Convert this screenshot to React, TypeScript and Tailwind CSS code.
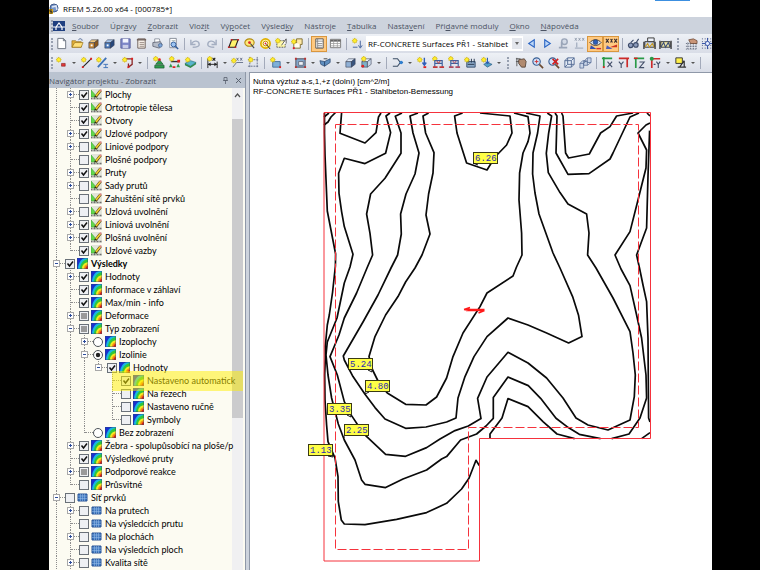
import React from 'react';

type IconName = keyof typeof drawings;

type Tool = { icon: IconName; label: string; active?: boolean; menu?: boolean } | 'sep' | 'grip';

type TreeRow = {
  label: string;
  level: number;
  icon: 'model' | 'results' | 'mesh';
  state?: 'on' | 'off' | 'mixed';
  radio?: boolean;
  toggle?: '+' | '-';
  bold?: boolean;
  marked?: boolean;
};

const Spark = ({ x = 4, y = 4 }: { x?: number; y?: number }) => (
  <g>
    <path d={`M${x - 3} ${y}h6M${x} ${y - 3}v6M${x - 2} ${y - 2}l4 4M${x + 2} ${y - 2}l-4 4`} stroke="#dcc020" strokeWidth="1" />
    <circle cx={x} cy={y} r="2.200" fill="#ffee30" stroke="#b89a00" strokeWidth=".4" />
  </g>
);

const Box = ({ front, top, side }: { front: string; top: string; side: string }) => (
  <g>
    <path d="M2 6h6v6H2z" fill={front} stroke="#333a50" strokeWidth=".6" />
    <path d="M2 6l3-3h7L8 6z" fill={top} stroke="#333a50" strokeWidth=".6" />
    <path d="M8 6l4-3v6l-4 3z" fill={side} stroke="#333a50" strokeWidth=".6" />
  </g>
);

const Supports = ({ tone }: { tone: string }) => (
  <g>
    <Spark x={3} y={3} />
    <path d="M3 12V5h8v7M3 8h8" stroke="#3c5f9e" strokeWidth="1.2" />
    <path d="M1 12h5M8 12h5" stroke={tone} strokeWidth="2" />
    <path d="M5 5l2 3 2-3" stroke={tone} />
  </g>
);

const drawings = {
  page: <path d="M3 1.500h6l2.500 2.500v8.500H3zM9 1.500V4h2.500" fill="#fff" stroke="#6b7280" />,
  open: (
    <g>
      <path d="M1 11V4h4l1 1h5v6z" fill="#e3b03a" stroke="#8f6a14" strokeWidth=".7" />
      <path d="M1 11l3-5h9l-2 5z" fill="#ffe07a" stroke="#8f6a14" strokeWidth=".7" />
      <path d="M8 3c2-2 4-1 4 1" stroke="#47618f" />
    </g>
  ),
  boxBrown: (
    <g>
      <Box front="#c98a3a" top="#f0c77c" side="#8c571b" />
      <path d="M4 9h2" stroke="#fff" strokeWidth="2" />
    </g>
  ),
  boxBlue: (
    <g>
      <Box front="#4a78b8" top="#a8c6ec" side="#26477c" />
      <path d="M4 9h2" stroke="#fff" strokeWidth="2" />
    </g>
  ),
  save: (
    <g>
      <path d="M2 2h10v10H2z" fill="#7d86c8" stroke="#5b629c" />
      <path d="M4 2h6v4H4z" fill="#f3f5ff" />
      <path d="M4 8.500h6V12H4z" fill="#c9cde8" />
    </g>
  ),
  report: (
    <g>
      <path d="M3 2h8v10H3z" fill="#f5eee6" stroke="#6d5f5a" />
      <path d="M2 3h10" stroke="#6d5f5a" strokeWidth="1.500" />
      <path d="M5 6h5M5 8h5M5 10h5" stroke="#9a8d86" />
    </g>
  ),
  print: (
    <g>
      <path d="M4 6V2h5l1 4" fill="#fff" stroke="#777d8c" strokeWidth=".8" />
      <path d="M2 6l8-1 2 3-3 4-7-2z" fill="#b6bcc8" stroke="#555b69" strokeWidth=".8" />
      <circle cx="10" cy="9" r="2" fill="#7fa6d8" stroke="#43608c" strokeWidth=".7" />
    </g>
  ),
  preview: (
    <g>
      <path d="M3 1.500h7v10H3z" fill="#fff" stroke="#6b7280" strokeWidth=".8" />
      <path d="M5 4h4M5 6h3" stroke="#9aa" />
      <circle cx="7" cy="8" r="2.600" fill="#9cc4f2" stroke="#305c9a" />
      <path d="M9 10l3 3" stroke="#305c9a" strokeWidth="1.600" />
    </g>
  ),
  undo: <path d="M2 3v5h5M3 7c2-4 8-3 8 1 0 2-2 3-7 3" stroke="#a3adc0" strokeWidth="1.500" />,
  redo: <path d="M12 3v5H7M11 7C9 3 3 4 3 8c0 2 2 3 7 3" stroke="#a3adc0" strokeWidth="1.500" />,
  plane: (
    <g>
      <path d="M2 11l3-8h7l-3 8z" fill="#fff36b" stroke="#222" strokeWidth="1.200" />
      <path d="M1 11h2M4 3h2M11 3h2M8 11h2" stroke="#c62424" strokeWidth="1.800" />
    </g>
  ),
  circlePick: (
    <g>
      <ellipse cx="7" cy="6" rx="5" ry="4" fill="#ffe97a" stroke="#b28c10" strokeWidth="1.200" />
      <circle cx="7" cy="6" r="1.500" fill="#d23" />
      <path d="M8 7l4 5" stroke="#444" strokeWidth="1.200" />
    </g>
  ),
  target: (
    <g>
      <circle cx="7" cy="7" r="5" fill="#fff3a0" stroke="#e0b000" strokeWidth="1.800" />
      <circle cx="7" cy="7" r="2.500" fill="#fff" stroke="#c58a00" />
      <circle cx="7" cy="7" r="1" fill="#d23" />
      <path d="M8 8l4 5" stroke="#333" />
    </g>
  ),
  selectNew: (
    <g>
      <path d="M2 4h9v7H2z" fill="#fff9a8" stroke="#555" strokeDasharray="2 1" />
      <Spark x={3} y={4} />
      <path d="M7 9l5-7v5" fill="#fff" stroke="#333" strokeWidth=".8" />
    </g>
  ),
  boxNew: (
    <g>
      <path d="M3 6h7v6H3z" fill="#fffdf0" stroke="#7c6a30" />
      <path d="M6 6V2h6v6h-2" fill="#ffe9a8" stroke="#7c6a30" />
      <circle cx="3" cy="12" r="1.200" fill="#d23" />
      <Spark x={3} y={5} />
    </g>
  ),
  list: (
    <g>
      <path d="M3 2h8v10H3z" fill="#fff" stroke="#555" />
      <path d="M3 4.500h8M5 7h5M5 9h5M5 11h5M5 2v10" stroke="#777" strokeWidth=".8" />
    </g>
  ),
  table: (
    <g>
      <path d="M1.500 2.500h11v9h-11z" fill="#fff" stroke="#777" />
      <path d="M1.500 4h11" stroke="#666" strokeWidth="2" />
      <path d="M1.500 7h11M1.500 9.500h11M5 3v9M9 3v9" stroke="#999" strokeWidth=".8" />
    </g>
  ),
  loadNew: (
    <g>
      <Spark x={4} y={4} />
      <path d="M10 4v7M8 9l2 3 2-3M2 11h5" stroke="#41609a" />
    </g>
  ),
  left: <path d="M10 3L4 7l6 4z" fill="#bcd7f8" stroke="#2c66c4" strokeWidth="1.200" />,
  right: <path d="M4 3l6 4-6 4z" fill="#bcd7f8" stroke="#2c66c4" strokeWidth="1.200" />,
  showLoad: (
    <g>
      <circle cx="8" cy="5" r="3" fill="#d3dae6" stroke="#9aa5b8" strokeWidth="1.500" />
      <path d="M5 5v6M2 11.500h9" stroke="#9aa5b8" strokeWidth="1.800" />
    </g>
  ),
  values: (
    <g>
      <path d="M2 1l2 3M4 1L2 4M6 1l2 3M8 1L6 4M10 1l2 3M12 1l-2 3" stroke="#8d97a8" strokeWidth=".9" />
      <path d="M4 6v5M2 12h9" stroke="#a9b3c4" strokeWidth="1.500" />
    </g>
  ),
  eye: (
    <g>
      <path d="M1 6c3-4 9-4 12 0-3 4-9 4-12 0z" fill="#dbe8fa" stroke="#333" />
      <circle cx="7" cy="5.500" r="2.600" fill="#2c5fb8" stroke="#1b2c58" strokeWidth=".6" />
      <path d="M1 13h7L2 9z" fill="#3350b0" />
      <path d="M8 12.500h5" stroke="#c33" strokeWidth="1.500" />
    </g>
  ),
  valuesOn: (
    <g>
      <path d="M1 2l3 4M4 2L1 6M6 2l2 4M8 2L6 6M10 2l3 4M13 2l-3 4" stroke="#3a3030" strokeWidth="1.100" />
      <path d="M1 13h7L2 9z" fill="#5060b8" />
      <path d="M5 11l8-3v3z" fill="#cc3320" />
    </g>
  ),
  glasses: (
    <g>
      <circle cx="4" cy="9" r="2.500" fill="#8e9dbe" stroke="#3c4a68" strokeWidth="1.200" />
      <circle cx="9.500" cy="8.500" r="2.500" fill="#8e9dbe" stroke="#3c4a68" strokeWidth="1.200" />
      <path d="M4 6l3-3M10 6l2.500-4" stroke="#3c4a68" strokeWidth="1.200" />
    </g>
  ),
  film: (
    <g>
      <path d="M2 5h10v6H2z" fill="#cdd6ea" stroke="#333" />
      <path d="M2 11l3-4 2 4 3-4 2 4" stroke="#c79b20" strokeWidth="1.200" />
      <path d="M1 13V5M13 13V5" stroke="#333" strokeWidth="1.400" />
      <path d="M5 1h7v4H5z" fill="#eef2fa" stroke="#333" />
    </g>
  ),
  film2: (
    <g>
      <path d="M2 5h10v6H2z" fill="#f3e9a8" stroke="#333" />
      <path d="M2 11l3-5 2 5 3-5 2 5" stroke="#3c4f7a" strokeWidth="1.200" />
      <path d="M1 13V4M13 13V4" stroke="#333" strokeWidth="1.400" />
    </g>
  ),
  handGrid: (
    <g>
      <path d="M1 7h12M1 10h12M1 13h12M3 6v7M6 6v7M9 6v7M12 6v7" stroke="#555e70" strokeDasharray="1 1" />
      <path d="M4 3l5-1 4 2v3H6z" fill="#c99578" stroke="#5b3825" strokeWidth=".7" />
    </g>
  ),
  snap: (
    <g>
      <path d="M1 2h12M1 5h12M1 9h12M1 12h12" stroke="#44507a" strokeDasharray="1 2" />
      <path d="M7 1v12M1 7h12" stroke="#2c4ba0" />
      <circle cx="7" cy="7" r="2.300" fill="#e6edff" stroke="#2c4ba0" />
    </g>
  ),
  node: (
    <g>
      <Spark x={4} y={4} />
      <path d="M7 8h4v3H7z" fill="#e03a3a" stroke="#801818" strokeWidth=".6" />
    </g>
  ),
  line: (
    <g>
      <path d="M3 12L12 3" stroke="#222" strokeWidth="1.200" />
      <path d="M2 11h2v2H2zM11 2h2v2h-2z" fill="#d22" />
      <Spark x={4} y={4} />
    </g>
  ),
  member: (
    <g>
      <path d="M2 12L11 2" stroke="#3f73b8" strokeWidth="2" />
      <path d="M8 9h5M8 12.500h5M10.500 9v3.500" stroke="#3f73b8" />
      <Spark x={3} y={4} />
    </g>
  ),
  polygon: (
    <g>
      <path d="M4 3h8v6l-4 3V8" stroke="#8b2525" strokeWidth="1.400" />
      <path d="M11 2h2v2h-2zM7 11h2v2H7z" fill="#d22" />
      <Spark x={4} y={4} />
    </g>
  ),
  nodeSupport: (
    <g>
      <path d="M8 4l4 5H4zM3 10h10v3H3z" fill="#2f9a4c" stroke="#145528" strokeWidth=".7" />
      <circle cx="8" cy="4" r="1.500" fill="#d22" />
      <Spark x={4} y={3} />
    </g>
  ),
  lineSupport: (
    <g>
      <path d="M3 6h9" stroke="#333" strokeWidth="1.500" />
      <path d="M3 8l2 4H1zM11 8l2 4H9z" fill="#2f9a4c" />
      <path d="M10 4h3v3h-3zM5 11h3v2H5z" fill="#d22" />
      <Spark x={4} y={3} />
    </g>
  ),
  surfaceSupport: (
    <g>
      <path d="M1 8l6-3 6 2-6 4z" fill="#58b6cc" stroke="#2a6c80" strokeWidth=".7" />
      <path d="M1 8v2l6 3v-2zM7 11v2l6-4V7z" fill="#2f8a4c" />
      <Spark x={4} y={4} />
    </g>
  ),
  dimension: (
    <g>
      <path d="M2 3v10M12 6v7M2 9h10" stroke="#222" />
      <path d="M2 9l3-2v4zM12 9L9 7v4z" fill="#222" />
      <path d="M7 2l3 3M10 2L7 5" stroke="#222" strokeWidth="1.200" />
      <Spark x={4} y={3} />
    </g>
  ),
  comment: (
    <g>
      <path d="M6 2l2 3M8 2L6 5M10 2l2 3M12 2l-2 3" stroke="#67708a" />
      <path d="M2 12l4-5h7" stroke="#67708a" />
      <Spark x={3} y={5} />
    </g>
  ),
  grid: (
    <g>
      <path d="M3 1v12M11 1v12M1 4h12M1 11h12" stroke="#66708a" strokeDasharray="2 1" />
      <Spark x={4} y={4} />
    </g>
  ),
  surface: (
    <g>
      <path d="M4 6h8v6H4z" fill="#7fb0d8" stroke="#47719c" />
      <path d="M11 11h2v2h-2z" fill="#d22" />
      <Spark x={4} y={4} />
    </g>
  ),
  opening: (
    <g>
      <path d="M2 3h10v9H2z" fill="#83a7cc" stroke="#4c4c58" />
      <path d="M5 6h5v4H5z" fill="#eef2f8" stroke="#4c4c58" strokeWidth=".7" />
      <path d="M1 2h2v2H1zM11 2h2v2h-2zM1 11h2v2H1zM11 11h2v2h-2z" fill="#b33" />
    </g>
  ),
  sweep: (
    <g>
      <path d="M1 5l5 1v5l-4-2zM6 6l6-3v4l-6 4z" fill="#5f8fc0" stroke="#2c4970" strokeWidth=".8" />
      <path d="M5 3h4" stroke="#444" />
    </g>
  ),
  solid: <Box front="#8fb0d6" top="#dfe9f7" side="#39557f" />,
  solidNew: (
    <g>
      <Box front="#7fb0c8" top="#eef3fa" side="#c9d6e6" />
      <circle cx="3" cy="11" r="1.500" fill="#d22" />
      <Spark x={4} y={3} />
    </g>
  ),
  branch: (
    <g>
      <path d="M2 3h5l3 4-3 4H2M10 7h3" stroke="#3c4f66" strokeWidth="1.200" />
      <circle cx="11" cy="7" r="1.800" fill="#2f7fd0" />
    </g>
  ),
  nodalLoad: (
    <g>
      <path d="M9 2v7M7 7l2 3 2-3" stroke="#2f5fb8" strokeWidth="1.500" />
      <path d="M8 11h3v2H8z" fill="#d22" />
      <Spark x={4} y={4} />
    </g>
  ),
  memberLoad: <Supports tone="#c43838" />,
  lineLoad: <Supports tone="#b04a60" />,
  surfaceLoad: (
    <g>
      <path d="M3 6h9v6H3z" fill="#8aa8c8" stroke="#38506e" />
      <path d="M5 3v4M8 3v4M11 3v4M4 9h7" stroke="#26364c" />
      <Spark x={3} y={4} />
    </g>
  ),
  freeLoad: (
    <g>
      <path d="M4 9l4-2 5 2-5 3z" fill="#52a0c8" stroke="#285a80" strokeWidth=".7" />
      <path d="M8 2v6M6 6l2 2 2-2" stroke="#2c5fb0" strokeWidth="1.200" />
      <Spark x={4} y={4} />
    </g>
  ),
  handBox: (
    <g>
      <path d="M1 3h5M1 6h4M2 2v9" stroke="#555" />
      <path d="M4 4l6-1 2 3-1 6H7L4 8z" fill="#b08a70" stroke="#443328" strokeWidth=".8" />
    </g>
  ),
  zoom: (
    <g>
      <circle cx="6" cy="6" r="4" fill="#cfe2fa" stroke="#3a5f94" strokeWidth="1.200" />
      <path d="M4 6h4M6 4v4" stroke="#c33" />
      <path d="M9 9l4 4" stroke="#6b4a30" strokeWidth="1.800" />
    </g>
  ),
  zoomOff: (
    <g>
      <circle cx="6" cy="6" r="4" fill="#cfe2fa" stroke="#3a5f94" strokeWidth="1.200" />
      <path d="M6 3l6 6M12 3L6 9" stroke="#d02020" strokeWidth="1.800" />
      <path d="M9 9l4 4" stroke="#6b4a30" strokeWidth="1.800" />
    </g>
  ),
  cube: (
    <path d="M2 5h7v7H2zM2 5l3-3h7v7l-3 3M9 5l3-3M5 2v7h7M5 9l-3 3" fill="#e3ebf6" stroke="#536b94" />
  ),
  cubes: (
    <path d="M1 8h4v5H1zM5 6h4v4H5zM9 2h4v5H9zM1 8l3-3h4L5 8M5 6l4-4M9 10l4-3" fill="#c9d5e8" stroke="#536b94" strokeWidth=".8" />
  ),
  axisX: (
    <g>
      <path d="M1 2.500h11M3 1v11" stroke="#2a9a48" strokeWidth="1.800" />
      <path d="M2 12h2" stroke="#d22" strokeWidth="2" />
      <path d="M7 6l5 6M12 6l-5 6" stroke="#44506a" strokeWidth="1.200" />
    </g>
  ),
  axisY: (
    <g>
      <path d="M2 2.500h11M11 2v10" stroke="#cc2a2a" strokeWidth="1.800" />
      <path d="M2 6l2.500 3L7 6M4.500 9v4" stroke="#44506a" strokeWidth="1.200" />
    </g>
  ),
  axisZ: (
    <g>
      <path d="M1 2.500h11M3 2v11" stroke="#2a9a48" strokeWidth="1.800" />
      <path d="M1 2.500h4" stroke="#d22" strokeWidth="1.500" />
      <path d="M7 6.500h5l-5 6h5" stroke="#44506a" strokeWidth="1.200" />
    </g>
  ),
  axisMinusY: (
    <g>
      <path d="M2 3h10M3 3v10" stroke="#cc2a2a" strokeWidth="1.800" />
      <circle cx="3" cy="3" r="2.200" fill="#2a9a48" />
      <path d="M5 9h2M8 6l2 3 2-3M10 9v4" stroke="#44506a" strokeWidth="1.200" />
    </g>
  ),
  display: (
    <g>
      <path d="M2 2h7v6H2z" fill="#fff04a" stroke="#333" />
      <path d="M4 12h9M6 12l5-7M11 5v7" stroke="#333" strokeWidth="1.300" />
    </g>
  ),
};

const Icon = ({ name }: { name: IconName }) => (
  <svg viewBox="0 0 14 14" fill="none" className="h-[13px] w-[13px]">
    {drawings[name]}
  </svg>
);

const menuItems = [
  ['', 'S', 'oubor'],
  ['Úpr', 'a', 'vy'],
  ['', 'Z', 'obrazit'],
  ['Vlož', 'i', 't'],
  ['Vý', 'p', 'očet'],
  ['Výsled', 'k', 'y'],
  ['Nástro', 'j', 'e'],
  ['', 'T', 'abulka'],
  ['Nasta', 'v', 'ení'],
  ['Při', 'd', 'avné moduly'],
  ['', 'O', 'kno'],
  ['', 'N', 'ápověda'],
];

const fileTools: Tool[] = [
  { icon: 'page', label: 'Nový' },
  { icon: 'open', label: 'Otevřít' },
  { icon: 'boxBrown', label: 'Správce projektů' },
  { icon: 'boxBlue', label: 'Správce bloků' },
  { icon: 'save', label: 'Uložit' },
  { icon: 'report', label: 'Protokol' },
  { icon: 'print', label: 'Tisk' },
  { icon: 'preview', label: 'Náhled' },
  'sep',
  { icon: 'undo', label: 'Zpět' },
  { icon: 'redo', label: 'Znovu' },
  'sep',
  { icon: 'plane', label: 'Pracovní rovina' },
  { icon: 'circlePick', label: 'Výběr elipsou' },
  { icon: 'target', label: 'Výběr kruhem' },
  { icon: 'selectNew', label: 'Výběr oknem' },
  { icon: 'boxNew', label: 'Nová viditelnost' },
  'sep',
  { icon: 'list', label: 'Navigátor', active: true },
  { icon: 'table', label: 'Tabulky' },
  'sep',
  { icon: 'loadNew', label: 'Nový zatěžovací stav' },
];

const resultTools: Tool[] = [
  { icon: 'left', label: 'Předchozí' },
  { icon: 'right', label: 'Další' },
  { icon: 'showLoad', label: 'Zobrazit zatížení' },
  { icon: 'values', label: 'Hodnoty zatížení' },
  { icon: 'eye', label: 'Zobrazit výsledky', active: true },
  { icon: 'valuesOn', label: 'Hodnoty výsledků', active: true },
  'sep',
  { icon: 'glasses', label: 'Výsledky' },
  { icon: 'film', label: 'Animace' },
  { icon: 'film2', label: 'Průběhy' },
  'grip',
  { icon: 'handGrid', label: 'Rastr' },
  { icon: 'snap', label: 'Uchopení' },
];

const modelTools: Tool[] = [
  { icon: 'node', label: 'Uzel', menu: true },
  { icon: 'line', label: 'Linie' },
  { icon: 'member', label: 'Prut', menu: true },
  { icon: 'polygon', label: 'Polygon', menu: true },
  'sep',
  { icon: 'nodeSupport', label: 'Uzlová podpora' },
  { icon: 'lineSupport', label: 'Liniová podpora' },
  { icon: 'surfaceSupport', label: 'Plošná podpora' },
  'sep',
  { icon: 'dimension', label: 'Kóta', menu: true },
  { icon: 'comment', label: 'Komentář' },
  { icon: 'grid', label: 'Osový rastr' },
  'sep',
  { icon: 'surface', label: 'Plocha', menu: true },
  { icon: 'opening', label: 'Otvor', menu: true },
  { icon: 'sweep', label: 'Průnik', menu: true },
  { icon: 'solid', label: 'Těleso' },
  { icon: 'solidNew', label: 'Nové těleso', menu: true },
  'sep',
  { icon: 'branch', label: 'Sada prutů', menu: true },
  { icon: 'nodalLoad', label: 'Zatížení na uzel' },
  { icon: 'memberLoad', label: 'Zatížení na prut' },
  { icon: 'lineLoad', label: 'Zatížení na linii' },
  { icon: 'surfaceLoad', label: 'Zatížení na plochu' },
  { icon: 'freeLoad', label: 'Volné zatížení', menu: true },
  'grip',
  { icon: 'handBox', label: 'Posun pohledu' },
  { icon: 'zoom', label: 'Zvětšit' },
  { icon: 'zoomOff', label: 'Zobrazit vše' },
  { icon: 'cube', label: 'Izometrie' },
  { icon: 'cubes', label: 'Perspektiva' },
  'sep',
  { icon: 'axisX', label: 'Pohled X' },
  { icon: 'axisY', label: 'Pohled Y' },
  { icon: 'axisZ', label: 'Pohled Z' },
  { icon: 'axisMinusY', label: 'Pohled -Y', menu: true },
  { icon: 'display', label: 'Zobrazení', menu: true },
  'sep',
];

const treeRows: TreeRow[] = [
  { label: 'Plochy', level: 1, icon: 'model', state: 'on', toggle: '+' },
  { label: 'Ortotropie tělesa', level: 1, icon: 'model', state: 'on' },
  { label: 'Otvory', level: 1, icon: 'model', state: 'on' },
  { label: 'Uzlové podpory', level: 1, icon: 'model', state: 'on', toggle: '+' },
  { label: 'Liniové podpory', level: 1, icon: 'model', toggle: '+' },
  { label: 'Plošné podpory', level: 1, icon: 'model' },
  { label: 'Pruty', level: 1, icon: 'model', state: 'on', toggle: '+' },
  { label: 'Sady prutů', level: 1, icon: 'model', toggle: '+' },
  { label: 'Zahuštění sítě prvků', level: 1, icon: 'model' },
  { label: 'Uzlová uvolnění', level: 1, icon: 'model', toggle: '+' },
  { label: 'Liniová uvolnění', level: 1, icon: 'model', state: 'on', toggle: '+' },
  { label: 'Plošná uvolnění', level: 1, icon: 'model', state: 'on', toggle: '+' },
  { label: 'Uzlové vazby', level: 1, icon: 'model', state: 'on' },
  { label: 'Výsledky', level: 0, icon: 'results', state: 'on', toggle: '-', bold: true },
  { label: 'Hodnoty', level: 1, icon: 'results', state: 'on', toggle: '+' },
  { label: 'Informace v záhlaví', level: 1, icon: 'results', state: 'on' },
  { label: 'Max/min - info', level: 1, icon: 'results', state: 'on' },
  { label: 'Deformace', level: 1, icon: 'results', state: 'mixed', toggle: '+' },
  { label: 'Typ zobrazení', level: 1, icon: 'results', state: 'mixed', toggle: '-' },
  { label: 'Izoplochy', level: 2, icon: 'results', radio: true, toggle: '+' },
  { label: 'Izolinie', level: 2, icon: 'results', radio: true, state: 'on', toggle: '-' },
  { label: 'Hodnoty', level: 3, icon: 'results', state: 'on', toggle: '-' },
  { label: 'Nastaveno automatick', level: 4, icon: 'results', state: 'on', marked: true },
  { label: 'Na řezech', level: 4, icon: 'results' },
  { label: 'Nastaveno ručně', level: 4, icon: 'results' },
  { label: 'Symboly', level: 4, icon: 'results' },
  { label: 'Bez zobrazení', level: 2, icon: 'results', radio: true },
  { label: 'Žebra - spolupůsobící na ploše/p', level: 1, icon: 'results', state: 'on', toggle: '+' },
  { label: 'Výsledkové pruty', level: 1, icon: 'results', state: 'on' },
  { label: 'Podporové reakce', level: 1, icon: 'results', state: 'mixed', toggle: '+' },
  { label: 'Průsvitné', level: 1, icon: 'results' },
  { label: 'Síť prvků', level: 0, icon: 'mesh', toggle: '-' },
  { label: 'Na prutech', level: 1, icon: 'mesh', toggle: '+' },
  { label: 'Na výsledcích prutu', level: 1, icon: 'mesh' },
  { label: 'Na plochách', level: 1, icon: 'mesh', toggle: '+' },
  { label: 'Na výsledcích ploch', level: 1, icon: 'mesh' },
  { label: 'Kvalita sítě', level: 1, icon: 'mesh', toggle: '+' },
];

// True when the branch line of the given level goes on below this row
const lineContinues = (index: number, level: number) => {
  for (let i = index + 1; i < treeRows.length; i++) {
    if (treeRows[i].level < level) return false;
    if (treeRows[i].level === level) return true;
  }
  return level <= 1;
};

const isolines = [
  '324,125 328,122 331,117 335.5,112.5',
  '324,117 329,113',
  '324.5,113 324.5,133 325,155 327.3,211 335.6,254 335.4,266 332.6,292 329.3,315 327.3,325 325.3,346 325.3,358 324.7,375 325,400 326.6,425 328,441.6 335,458 338,476.6 338.3,501.6 341.3,520 344.3,524 365,524.6 396.6,519.3 426.6,512.6 446.6,503.3 461.6,489 469,478.3 476,460.3 479.3,465.6',
  '341.6,112.6 340,133.3 365,143 376,132.6 378.5,117 381,113',
  '390,113 386,116 390.6,132.6 385.6,153.3 365,163.6 344.3,158.3 338.6,173.3 339,193.3 341.6,211.6 344.3,226.6 353,254.3 350,267 344.3,283 337,318 327.3,342 326,355 328,375 331.6,398 338.3,424 344.3,440 355,460 361.6,480 365,484.3 385.6,487.6 403,479 426.6,470 441.6,459 446.6,456.6 460.6,440 476.6,434 486,426 493.3,418.3 493.3,397.6 508,377 528.3,385.6 540.6,398.3 556,418.3 568.3,427.6 579.3,434.3 600.6,438.6',
  '402,113 395.3,116.3 401,133 401,153.3 385,178.3 370.6,194 366.6,214 370,233.3 372.6,255 367,268 356.6,293 344.3,318 339,335 330,356.6 337.3,375 344.3,401.6 351.6,415.6 363.3,433.3 385.6,454.3 405.6,456.3 426.6,447.6 440,439 455,430.6 468.3,426 481,418.6 477.6,398.3 487,377 508,352.3 528,363 546.6,378 563,398 576,418 588,425 608,430 630,420 634.3,396.6 635.3,375 633,353 630,331.6 613,298 596,268 587.6,255 589,233 586.6,214 568,204 560,192.6 548.3,172.6 546.3,153.3 548.6,133.3 551.6,116 547.3,113',
  '418,113 410,116 413,133 419,153 415,174 406,194 400.6,214 401.3,234 397.6,255 391,268 378,295 363,322 343.3,356 344.3,360 353,376.6 365,394.3 375,407.6 385,419 405.6,428.3 426,427 446.6,422 456,418 458,398 465,376.6 474,356.6 487,336.6 508,318 528,325 546.6,333 568.6,343 582,336.6 578.6,315.6 572.6,296.6 560,268 553,253 539,214 535,193 532.6,174 533,153 537.6,133 540,116 526,113',
  '428.6,113 423,116 425.6,133 434,152.6 433,173 428.6,194 426,215 430,234 422,255 415,268 405.6,282 398,296.6 385.6,315 375,336.6 369,356.6 372.6,370 380,385 387.3,393 405.6,404.3 426,405 436.6,397 446.6,378 453,356.6 463,333 480,306.6 487,293 513,276 516.5,267 522,255 521.6,233 519,200 519.6,173 523,153 528,141.6 530,133 528,116.6 514,113',
  '462.6,113 454.6,116 457,133 466.6,163 487,170 495,157 506.6,145 512,133 510,116 480,113',
  '555,113 557,116 556,153 568,174.3 589,173.6 610,159 613,153 630,117 639,113',
  '561.6,113 563,116 565.6,153 568.6,158 589.3,154 600.6,133 610,126.6 616.6,116 633,113',
  '650,123 646,125 638,133 646.6,150 646,168 638,200 630,231.6 615,255 621,269 630,285.6 636.6,315 641.6,338 646,375 646.6,398 640,418 629,434 611.6,438.6',
  '649.6,130.6 648,176 646.6,228 636.6,255 639.5,268 643,285 646.6,301.6 648,338 648.6,418 650,422',
  '647,113 650,116',
  '641.6,438.6 650,432.6',
  '490,438.6 490,434 502,418 508,398.6 528,406.6 543,421.6 557,434 574.6,438.6',
];

const valueTags = [
  { value: '6.26', x: 473, y: 152, tail: 'M473 163l5 2' },
  { value: '5.24', x: 348, y: 358, tail: 'M368 370l4 2v-2' },
  { value: '4.80', x: 365, y: 380, tail: 'M365 392v2l4-2' },
  { value: '3.35', x: 327, y: 403, tail: 'M347 415l4 2v-2' },
  { value: '2.25', x: 344, y: 424, tail: 'M344 436v2' },
  { value: '1.13', x: 308, y: 444, tail: 'M328 456l5 1v-2' },
];

const ToolItem = ({ tool }: { tool: Tool }) => {
  if (tool === 'sep') {
    return (
      <span className="flex w-[6px] shrink-0 justify-center">
        <span className="h-3 w-px bg-[#a3aaba]" />
      </span>
    );
  }
  if (tool === 'grip') {
    return (
      <span className="flex w-[10px] shrink-0 justify-center">
        <span className="h-3 border-l-2 border-dotted border-[#98a0b0]" />
      </span>
    );
  }
  return (
    <>
      <button
        type="button"
        aria-label={tool.label}
        className={
          tool.active
            ? 'flex h-4 w-4 shrink-0 items-center justify-center border border-[#d9973f] bg-[#ffc980]'
            : 'flex h-4 w-4 shrink-0 items-center justify-center'
        }
      >
        <Icon name={tool.icon} />
      </button>
      {tool.menu && (
        <button type="button" aria-label={`${tool.label} - nabídka`} className="flex h-4 w-[9px] shrink-0 items-center justify-center">
          <span className="border-x-2 border-t-2 border-x-transparent border-t-[#555]" />
        </button>
      )}
    </>
  );
};

const Toolbar = ({ children }: { children: React.ReactNode }) => (
  <div className="flex h-[19px] items-center overflow-hidden bg-linear-to-b from-[#eef1f6] to-[#d9dde7]">
    <span className="ml-[2px] h-3 shrink-0 border-l-2 border-dotted border-[#98a0b0]" />
    {children}
  </div>
);

const TreeIcon = ({ kind }: { kind: TreeRow['icon'] }) => {
  if (kind === 'mesh') {
    return (
      <svg viewBox="0 0 11 11" fill="none" className="h-[11px] w-[11px] shrink-0">
        <path d="M1 2h9v7H1z" fill="#3f78c0" stroke="#2a5596" />
        <path d="M3.500 2v7M5.500 2v7M7.500 2v7M1 4h9M1 6.500h9" stroke="#9cc0ea" strokeWidth=".5" />
      </svg>
    );
  }
  if (kind === 'model') {
    return (
      <svg viewBox="0 0 11 11" fill="none" className="h-[11px] w-[11px] shrink-0">
        <path d="M0 0h11v11H0z" fill="#e2e5da" />
        <path d="M0 1l6 7H0z" fill="#62d84e" stroke="#3da535" strokeWidth=".6" />
        <path d="M0 9.500h11" stroke="#6f6f6f" strokeWidth="1.500" strokeDasharray="1 .5" />
        <path d="M4.500 8L9.500 1.500" stroke="#4d3b10" strokeWidth="2.800" />
        <path d="M5 7l4.500-5.500" stroke="#f2cf30" strokeWidth="1.700" />
        <path d="M9 2l1.200-1.200" stroke="#d88" strokeWidth="2" />
        <path d="M3 8.800l1-2 1.300 1z" fill="#222" />
      </svg>
    );
  }
  return (
    <svg viewBox="0 0 11 11" fill="none" className="h-[11px] w-[11px] shrink-0">
      <path d="M0 0h11v11H0z" fill="#1a2fd0" />
      <path d="M11 0v11H1C1 5 4 1 8 0z" fill="#18b8e0" />
      <path d="M11 1v10H3c0-5 3-9 8-10z" fill="#30c838" />
      <path d="M11 4v7H5c0-4 2-6 6-7z" fill="#f4ea20" />
      <path d="M11 6v5H7c0-3 1-4 4-5z" fill="#f48a18" />
      <path d="M11 8v3H8.500c0-2 1-3 2.500-3z" fill="#e02010" />
      <path d="M.25.25h10.500v10.500H.25z" stroke="#2b4a70" strokeWidth=".5" />
    </svg>
  );
};

const TreeItem = ({ row, index }: { row: TreeRow; index: number }) => (
  <li className="relative flex h-[13px] items-center">
    {Array.from({ length: row.level }, (_, level) => (
      <span key={level} className="flex h-full w-[14px] shrink-0 pl-[7px]">
        {lineContinues(index, level) && <span className="h-full border-l border-dotted border-[#8d8d8d]" />}
      </span>
    ))}
    <span className="relative flex h-full w-4 shrink-0 items-center pl-[7px]">
      <span
        className={
          lineContinues(index, row.level)
            ? 'h-full border-l border-dotted border-[#8d8d8d]'
            : 'h-[7px] self-start border-l border-dotted border-[#8d8d8d]'
        }
      />
      <span className="flex-1 border-t border-dotted border-[#8d8d8d]" />
      {row.toggle && (
        <button
          type="button"
          aria-label={row.toggle === '+' ? 'Rozbalit' : 'Sbalit'}
          className="absolute left-1 top-[3px] h-[7px] w-[7px] border border-[#a8a8a8] bg-white"
        >
          <svg viewBox="0 0 5 5" className="h-[5px] w-[5px]">
            <path d={row.toggle === '+' ? 'M1 2.500h3M2.500 1v3' : 'M1 2.500h3'} stroke="#2d4d9c" />
          </svg>
        </button>
      )}
    </span>
    <label className="flex min-w-0 items-center">
      <span className="relative flex shrink-0">
        <input
          type={row.radio ? 'radio' : 'checkbox'}
          name={row.radio ? 'display-type' : undefined}
          defaultChecked={row.state === 'on'}
          className={
            row.radio
              ? 'peer h-[10px] w-[10px] appearance-none rounded-full border border-[#4d5358] bg-white'
              : 'peer h-[10px] w-[10px] appearance-none border border-[#6a7178] bg-[#eef0f3]'
          }
        />
        {row.state === 'mixed' ? (
          <span className="absolute inset-[2px] bg-[#9a9a9a]" />
        ) : (
          <svg viewBox="0 0 10 10" fill="none" className="pointer-events-none absolute inset-0 hidden h-[10px] w-[10px] peer-checked:block">
            {row.radio ? <circle cx="5" cy="5" r="2.200" fill="#222" /> : <path d="M2.500 4.500l2 2.500 3.500-4.500" stroke="#111" strokeWidth="1.500" />}
          </svg>
        )}
      </span>
      <span className="ml-[2px] flex shrink-0">
        <TreeIcon kind={row.icon} />
      </span>
      <span className={row.bold ? 'ml-[3px] whitespace-nowrap font-bold' : 'ml-[3px] whitespace-nowrap'}>
        {row.label}
      </span>
    </label>
    {row.marked && <span className="pointer-events-none absolute -right-[11px] -top-[3px] left-[63px] z-10 h-5 bg-[#fff000]/50" />}
  </li>
);

const Navigator = () => (
  <aside className="flex w-[197px] shrink-0 flex-col border-r border-[#8f98a8] bg-[#fcfbf2]">
    <header className="flex h-4 shrink-0 items-center justify-between bg-[#bac3d0] pr-[3px] text-[#4a505c]">
      <h2>Navigátor projektu - Zobrazit</h2>
      <span className="flex gap-[6px]">
        <button type="button" aria-label="Připnout">
          <svg viewBox="0 0 7 7" fill="none" className="h-[7px] w-[7px]">
            <path d="M2 .5h3v3H2zM1 3.500h5M3.500 3.500V7" stroke="#5a6270" strokeWidth=".8" />
          </svg>
        </button>
        <button type="button" aria-label="Zavřít">
          <svg viewBox="0 0 7 7" fill="none" className="h-[7px] w-[7px]">
            <path d="M1 1l5 5M6 1L1 6" stroke="#5a6270" />
          </svg>
        </button>
      </span>
    </header>
    <div className="flex min-h-0 flex-1 pr-[2px]">
      <ul className="min-w-0 flex-1 font-['Lato',sans-serif] text-[9px] leading-[13px] text-black">
        {treeRows.map((row, index) => (
          <TreeItem key={index} row={row} index={index} />
        ))}
      </ul>
      <div className="flex w-[11px] shrink-0 flex-col bg-[#f0f0f2]">
        <button type="button" aria-label="Nahoru" className="flex h-[31px] shrink-0 justify-center pt-1">
          <svg viewBox="0 0 7 7" fill="none" className="h-[7px] w-[7px]">
            <path d="M1 5l2.500-3L6 5" stroke="#505050" strokeWidth="1.200" />
          </svg>
        </button>
        <div className="h-[62%] bg-[#cbcbcd]" />
      </div>
    </div>
  </aside>
);

const ResultView = () => (
  <main className="min-w-0 flex-1 overflow-hidden border-l border-t border-[#8f98a8] bg-white">
    <div className="pl-[3px] pt-1 font-['Liberation_Sans',sans-serif] text-[8px] leading-[10px] text-black">
      <p>Nutná výztuž a-s,1,+z (dolní) [cm^2/m]</p>
      <p>RF-CONCRETE Surfaces PŘ1 - Stahlbeton-Bemessung</p>
    </div>
    <svg viewBox="250 97 461 473" fill="none" className="h-[473px] w-[461px]">
      <g stroke="#0a0a0a" strokeWidth="1.700" strokeLinejoin="round">
        {isolines.map((points) => (
          <polyline key={points} points={points} />
        ))}
      </g>
      <path d="M324 112.500H650.500V438.500H479.500V561H324z" stroke="#f5323c" />
      <path d="M335.500 124.500H638.500V427.500H468.500V549.500H335.500z" stroke="#f5323c" strokeDasharray="9 3" />
      <path d="M464 309.500H484.500M464 309.500l6-2M464 309.500l6 1M484.500 310.500l-6 2.500M466 310.500H484" stroke="#ff1a1a" strokeWidth="1.500" />
      {valueTags.map((tag) => (
        <g key={tag.value}>
          <rect x={tag.x + 0.5} y={tag.y + 0.5} width="24" height="11" fill="#ffff46" stroke="#3a3a14" />
          <path d={tag.tail} stroke="#111" />
          <text x={tag.x + 2} y={tag.y + 9} fontSize="9" fill="#2a2ab4" fontFamily="'Liberation Mono', monospace">
            {tag.value}
          </text>
        </g>
      ))}
    </svg>
  </main>
);

const App = () => (
  <div className="h-screen overflow-hidden bg-black pl-[49px] pr-12 font-['Open_Sans',sans-serif] text-[8px] leading-[13px]">
    <div className="flex h-full flex-col bg-[#cdd3dd]">
      <header className="relative flex h-[17px] shrink-0 items-center bg-white text-black">
        <svg viewBox="0 0 10 12" fill="none" className="h-3 w-[10px]">
          <circle cx="5" cy="5" r="4" fill="#7896c8" stroke="#405a8c" />
          <path d="M3 4l4-1 1 4" stroke="#dfe8f8" strokeWidth="1.500" />
          <path d="M0 6h4v5H0z" fill="#d8a51a" />
          <path d="M3 7H1v1.500h2V10H1" stroke="#222" strokeWidth=".8" />
        </svg>
        <h1 className="ml-1">RFEM 5.26.00 x64 - [000785*]</h1>
        <span className="absolute right-[22px] top-0 h-px w-[35px] bg-[#3c8fe0]" />
      </header>

      <nav className="flex h-[17px] shrink-0 items-center text-[#4c5464]">
        <span className="ml-[2px] h-3 border-l-2 border-dotted border-[#98a0b0]" />
        <svg viewBox="0 0 12 10" fill="none" className="h-[10px] w-3">
          <path d="M0 0h12v10H0z" fill="#1f3f80" />
          <path d="M0 6h12M3 6l3-4 3 4M3 6v3M9 6v3" stroke="#fff" strokeWidth="1.200" />
        </svg>
        <div className="ml-[7px] flex gap-[11px] whitespace-nowrap">
          {menuItems.map(([before, key, after]) => (
            <button key={before + key + after} type="button">
              {before}
              <u>{key}</u>
              {after}
            </button>
          ))}
        </div>
      </nav>

      <div className="shrink-0">
        <Toolbar>
          {fileTools.map((tool, index) => (
            <ToolItem key={index} tool={tool} />
          ))}
          <span className="relative ml-px flex w-[157px] shrink-0 items-center bg-white">
            <select aria-label="Zatěžovací stav" className="h-[15px] w-full appearance-none overflow-hidden pl-[2px] pr-[11px] text-black">
              <option>RF-CONCRETE Surfaces PŘ1 - Stahlbet</option>
            </select>
            <span className="pointer-events-none absolute inset-y-[2px] right-px flex w-[10px] items-center justify-center bg-[#e3e6ec]">
              <span className="border-x-2 border-t-[3px] border-x-transparent border-t-[#666]" />
            </span>
          </span>
          {resultTools.map((tool, index) => (
            <ToolItem key={index} tool={tool} />
          ))}
        </Toolbar>
        <Toolbar>
          {modelTools.map((tool, index) => (
            <ToolItem key={index} tool={tool} />
          ))}
        </Toolbar>
      </div>

      <div className="flex min-h-0 flex-1 gap-[3px]">
        <Navigator />
        <ResultView />
      </div>
    </div>
  </div>
);

export default App;
